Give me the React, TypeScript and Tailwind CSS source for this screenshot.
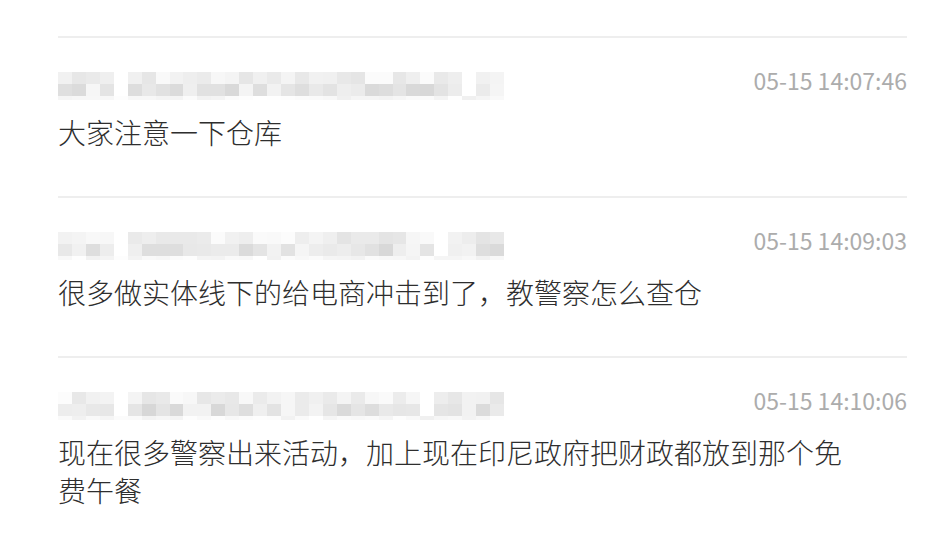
import React from "react";

type Item = { time: string; text: string; seed: number; gaps: number[] };

const items: Item[] = [
  { time: "05-15 14:07:46", text: "大家注意一下仓库", seed: 7, gaps: [4, 29] },
  { time: "05-15 14:09:03", text: "很多做实体线下的给电商冲击到了，教警察怎么查仓", seed: 19, gaps: [4, 27] },
  { time: "05-15 14:10:06", text: "现在很多警察出来活动，加上现在印尼政府把财政都放到那个免费午餐", seed: 41, gaps: [4, 26] },
];

function rng(seed: number) {
  let s = seed * 9301 + 49297;
  return () => {
    s = (s * 9301 + 49297) % 233280;
    return s / 233280;
  };
}

function Mosaic({ seed, gaps }: { seed: number; gaps: number[] }) {
  const r = rng(seed);
  const cols = 32;
  const rows = [0, 1];
  return (
    <div className="flex flex-col w-[446px]">
      {rows.map((row) => (
        <div key={row} className="flex h-[12px]">
          {Array.from({ length: cols }).map((_, c) => {
            const gap = gaps.includes(c);
            const v = gap ? 255 : Math.round(row === 0 ? 228 + r() * 24 : 214 + r() * 32);
            return (
              <div
                key={c}
                className="h-full flex-1"
                style={{ backgroundColor: `rgb(${v},${v},${v})` }}
              />
            );
          })}
        </div>
      ))}
      <div className="flex h-[4px]">
        {Array.from({ length: cols }).map((_, c) => {
          const v = Math.round(240 + r() * 15);
          return <div key={c} className="h-full flex-1" style={{ backgroundColor: `rgb(${v},${v},${v})` }} />;
        })}
      </div>
    </div>
  );
}

export default function App() {
  return (
    <div
      className="w-[950px] h-[539px] bg-white overflow-hidden pt-[36px] pl-[58px]"
      style={{ fontFamily: '"Noto Sans CJK SC", "Noto Sans", sans-serif' }}
    >
      <div className="w-[849px]">
        {items.map((it, i) => (
          <div key={i} className="border-t-2 border-[#eeeeee] pt-[34px] pb-[45px]">
            <div className="flex items-start justify-between h-[26px]">
              <Mosaic seed={it.seed} gaps={it.gaps} />
              <div className="text-[23px] leading-[26px] text-[#acacac] font-normal mt-[-5px]">{it.time}</div>
            </div>
            <div className="mt-[15px] max-w-[800px] text-[28px] leading-[38px] font-light text-[#2e2e2e]">{it.text}</div>
          </div>
        ))}
      </div>
    </div>
  );
}
